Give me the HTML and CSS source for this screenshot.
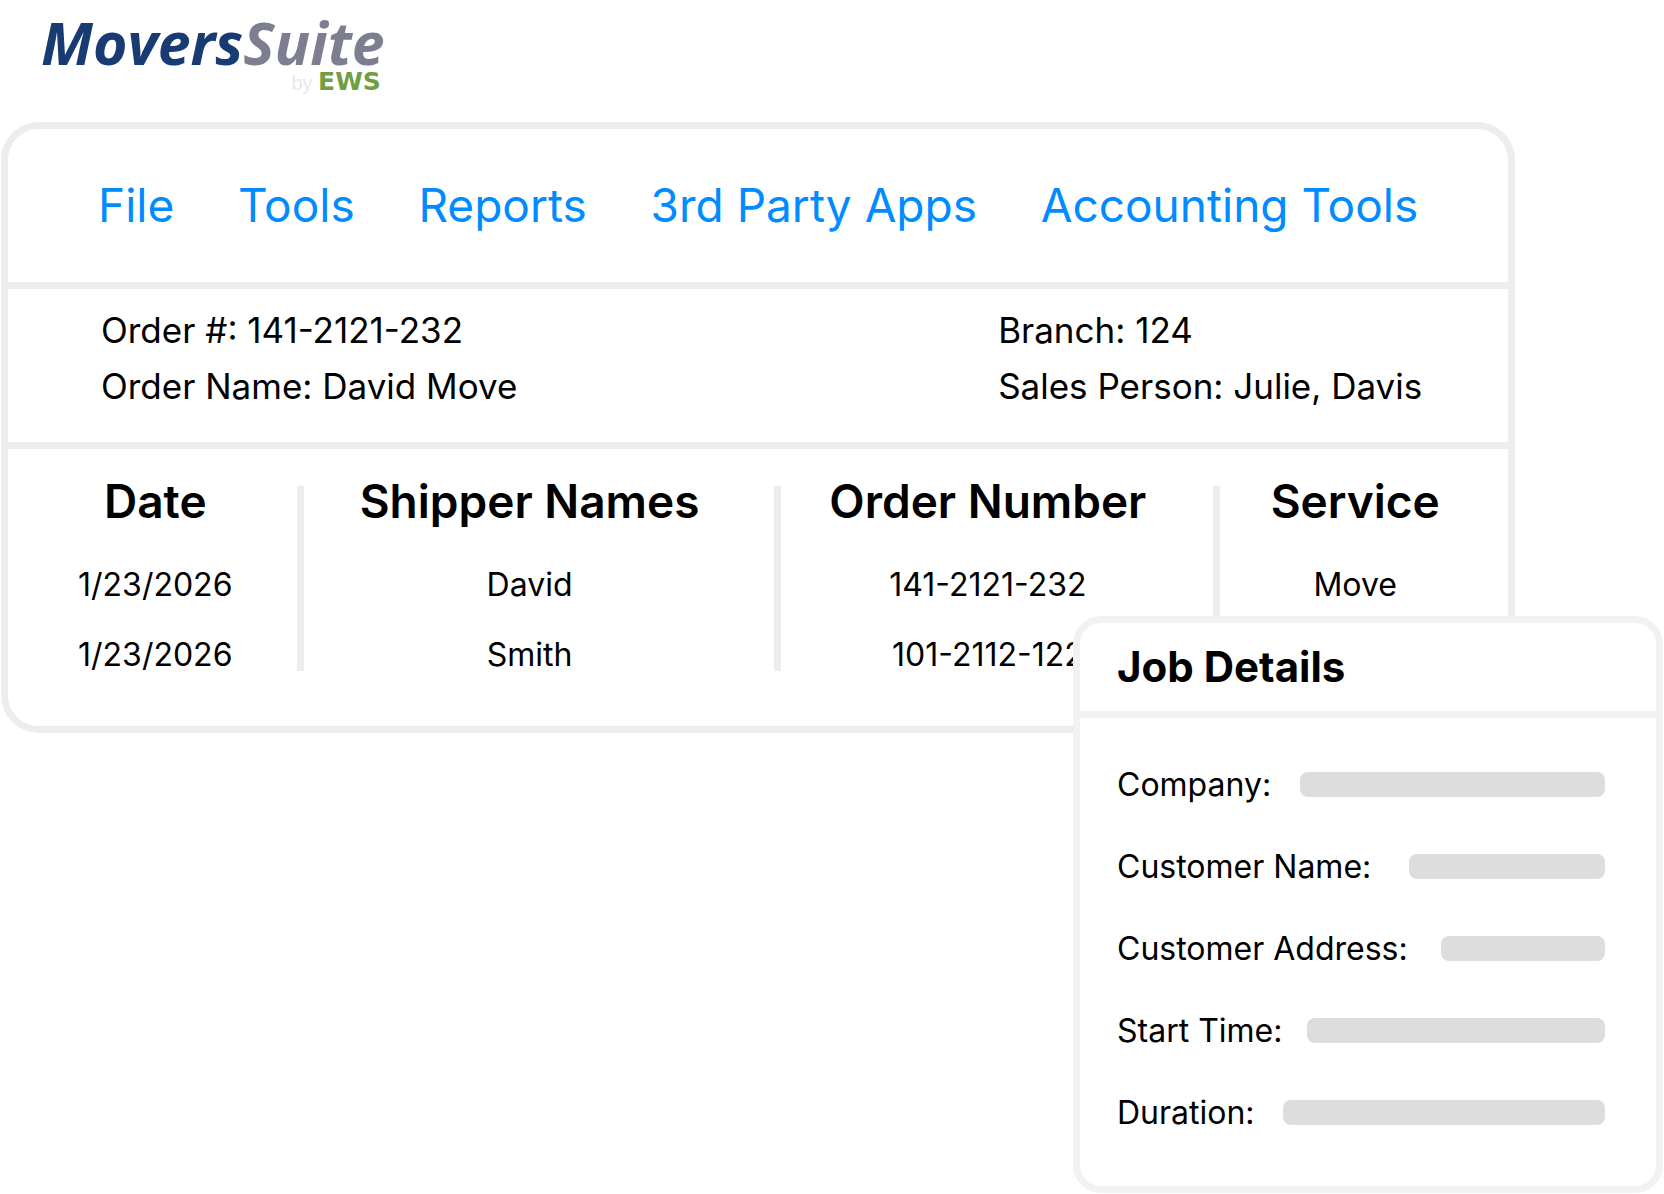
FILE: index.html
```html
<!DOCTYPE html>
<html lang="en">
<head>
    <meta charset="UTF-8">
    <meta name="viewport" content="width=device-width, initial-scale=1.0">
    <title>MoversSuite</title>
    <link rel="stylesheet" href="styles.css">
</head>
<body>
    <header class="logo">
        <div class="logo-name"><span class="logo-movers">Movers</span><span class="logo-suite">Suite</span></div>
        <div class="logo-by">by <strong>EWS</strong></div>
    </header>

    <main>
        <section class="panel">
            <nav class="menu">
                <a href="#">File</a>
                <a href="#">Tools</a>
                <a href="#">Reports</a>
                <a href="#">3rd Party Apps</a>
                <a href="#">Accounting Tools</a>
            </nav>

            <!-- Order summary -->
            <div class="order-info">
                <div>
                    <p>Order #: 141-2121-232</p>
                    <p>Order Name: David Move</p>
                </div>
                <div>
                    <p>Branch: 124</p>
                    <p>Sales Person: Julie, Davis</p>
                </div>
            </div>

            <div class="orders">
                <table>
                    <thead>
                        <tr>
                            <th class="col-date">Date</th>
                            <th class="col-shipper">Shipper Names</th>
                            <th class="col-order">Order Number</th>
                            <th>Service</th>
                        </tr>
                    </thead>
                    <tbody>
                        <tr>
                            <td>1/23/2026</td>
                            <td>David</td>
                            <td>141-2121-232</td>
                            <td>Move</td>
                        </tr>
                        <tr>
                            <td>1/23/2026</td>
                            <td>Smith</td>
                            <td>101-2112-122</td>
                            <td></td>
                        </tr>
                    </tbody>
                </table>
            </div>
        </section>

        <!-- Job details card, overlaps the panel corner -->
        <section class="job">
            <h2>Job Details</h2>
            <dl>
                <div class="job-row"><dt>Company:</dt><dd class="bar bar-company"></dd></div>
                <div class="job-row"><dt>Customer Name:</dt><dd class="bar bar-name"></dd></div>
                <div class="job-row"><dt>Customer Address:</dt><dd class="bar bar-address"></dd></div>
                <div class="job-row"><dt>Start Time:</dt><dd class="bar bar-start"></dd></div>
                <div class="job-row"><dt>Duration:</dt><dd class="bar bar-duration"></dd></div>
            </dl>
        </section>
    </main>
</body>
</html>
```
FILE: styles.css
```css
* {
    box-sizing: border-box;
}
body {
    margin: 0;
    background-color: #fff;
    color: #000;
    font-family: Inter, sans-serif;
}
h2, p, dl, dd {
    margin: 0;
}

/* Logo */
.logo {
    width: fit-content;
    height: 122px;
    padding: 9px 0 0 41px;
}
.logo-name {
    font-family: "Open Sans", sans-serif;
    font-size: 59px;
    font-weight: 700;
    font-style: italic;
    line-height: 66px;
}
.logo-movers {
    color: #193b74;
}
.logo-suite {
    color: #7d7f90;
}
.logo-by {
    padding-right: 4px;
    color: #e6e9f1;
    font-family: "Liberation Sans", sans-serif;
    font-size: 20px;
    line-height: 14px;
    text-align: right;
}
.logo-by strong {
    color: #709e41;
    font-family: "DejaVu Sans", sans-serif;
    font-size: 25px;
}

/* Main panel */
.panel {
    width: 91%;
    margin-left: 1px;
    border: 7px solid #ebeeed;
    border-radius: 38px;
}
.menu {
    display: flex;
    align-items: center;
    justify-content: space-between;
    height: 160px;
    padding: 0 90px 2px;
    border-bottom: 7px solid #ebeeed;
}
.menu a {
    color: #008cff;
    font-size: 46px;
    text-decoration: none;
}
.order-info {
    display: flex;
    justify-content: space-between;
    padding: 13px 86px 28px 93px;
    border-bottom: 7px solid #ebeeed;
    font-size: 35px;
    line-height: 56px;
}
.orders {
    padding: 37px 0 55px;
}
table {
    width: 100%;
    table-layout: fixed;
    border-collapse: separate;
    border-spacing: 0;
    text-align: center;
}
th, td {
    padding: 0 18px 0 0;
    border-right: 7px solid #ebeeed;
}
th:first-child, td:first-child {
    padding: 0 0 0 6px;
}
th:last-child, td:last-child {
    border-right: none;
}
th {
    height: 45px;
    font-size: 46px;
    font-weight: 600;
    line-height: 30px;
    vertical-align: top;
    white-space: nowrap;
}
td {
    height: 70px;
    font-size: 32px;
    line-height: 33px;
    vertical-align: bottom;
}
.col-date {
    width: 19.7%;
}
.col-shipper {
    width: 31.8%;
}
.col-order {
    width: 29.3%;
}

/* Job details */
.job {
    position: relative;
    width: 590px;
    margin: -117px 1px 0 auto;
    background-color: #fff;
    border: 7px solid #f0f3f2;
    border-radius: 28px;
}
.job h2 {
    padding: 0 37px;
    border-bottom: 7px solid #f0f3f2;
    font-size: 42px;
    font-weight: 700;
    line-height: 88px;
}
.job dl {
    padding: 25px 51px 33px 37px;
}
.job-row {
    display: flex;
    align-items: center;
    justify-content: space-between;
    height: 82px;
    font-size: 32px;
}
.bar {
    height: 25px;
    background-color: #ddd;
    border-radius: 8px;
}
.bar-company {
    width: 305px;
}
.bar-name {
    width: 196px;
}
.bar-address {
    width: 164px;
}
.bar-start {
    width: 298px;
}
.bar-duration {
    width: 322px;
}
```
